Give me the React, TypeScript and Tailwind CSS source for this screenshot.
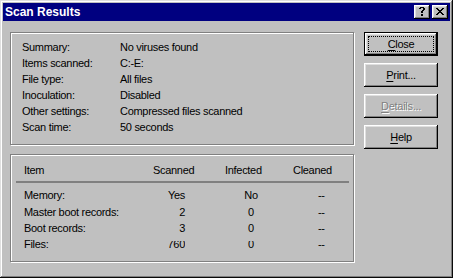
import React from "react";

const bevel =
  "shadow-[inset_-1px_-1px_#000,inset_1px_1px_#fff,inset_-2px_-2px_#808080,inset_2px_2px_#dfdfdf]";

function TitleButton({ children }: { children: React.ReactNode }) {
  return (
    <div className={`w-[16px] h-[14px] bg-[#c0c0c0] flex items-center justify-center ${bevel}`}>
      {children}
    </div>
  );
}

function HelpGlyph() {
  const rows = [".XXXX.", "XX..XX", "....XX", "...XX.", "..XX..", "..XX..", "......", "..XX..", "..XX.."];
  return (
    <svg width="6" height="9" viewBox="0 0 6 9" shapeRendering="crispEdges" className="-mt-[1px] -ml-[1px]">
      {rows.flatMap((r, y) =>
        r.split("").map((c, x) => (c === "X" ? <rect key={`${x}-${y}`} x={x} y={y} width="1" height="1" fill="#000" /> : null))
      )}
    </svg>
  );
}

function CloseGlyph() {
  const rows = ["XX....XX", ".XX..XX.", "..XXXX..", "...XX...", "..XXXX..", ".XX..XX.", "XX....XX"];
  return (
    <svg width="8" height="7" viewBox="0 0 8 7" shapeRendering="crispEdges" className="-mt-[1px] -ml-[1px]">
      {rows.flatMap((r, y) =>
        r.split("").map((c, x) => (c === "X" ? <rect key={`${x}-${y}`} x={x} y={y} width="1" height="1" fill="#000" /> : null))
      )}
    </svg>
  );
}

function Btn({
  label,
  u,
  rest,
  isDefault,
  disabled,
}: {
  label?: string;
  u: string;
  rest: string;
  isDefault?: boolean;
  disabled?: boolean;
}) {
  const text = (
    <span
      className={
        disabled
          ? "text-[#808080] [text-shadow:1px_1px_0_#fff]"
          : "text-black"
      }
    >
      <span className="underline underline-offset-[2px]">{u}</span>
      {rest}
    </span>
  );
  if (isDefault) {
    return (
      <div className="w-[74px] h-[24px] border border-black bg-[#c0c0c0] relative">
        <div className={`w-full h-full flex items-center justify-center ${bevel}`}>{text}</div>
        <div className="absolute inset-[3px] border border-dotted border-black" />
      </div>
    );
  }
  return (
    <div className={`w-[74px] h-[24px] bg-[#c0c0c0] flex items-center justify-center ${bevel}`} aria-label={label}>
      {text}
    </div>
  );
}

const summary: [string, string][] = [
  ["Summary:", "No viruses found"],
  ["Items scanned:", "C:-E:"],
  ["File type:", "All files"],
  ["Inoculation:", "Disabled"],
  ["Other settings:", "Compressed files scanned"],
  ["Scan time:", "50 seconds"],
];

const results: { item: string; scanned: string; infected: string; cleaned: string; h: string; clip?: boolean }[] = [
  { item: "Memory:", scanned: "Yes", infected: "No", cleaned: "--", h: "h-[17px]" },
  { item: "Master boot records:", scanned: "2", infected: "0", cleaned: "--", h: "h-[16px]" },
  { item: "Boot records:", scanned: "3", infected: "0", cleaned: "--", h: "h-[16px]" },
  { item: "Files:", scanned: "760", infected: "0", cleaned: "--", h: "h-[16px]", clip: true },
];

export default function App() {
  return (
    <div
      className={`w-[453px] h-[278px] bg-[#c0c0c0] p-[3px] flex flex-col font-['Liberation_Sans',Arial,sans-serif] text-[11px] tracking-[-0.3px] text-black shadow-[inset_-1px_-1px_#0a0a0a,inset_1px_1px_#dfdfdf,inset_-2px_-2px_#808080,inset_2px_2px_#fff] overflow-hidden`}
    >
      {/* Title bar */}
      <div className="h-[18px] bg-[#000080] flex items-center pl-[2px] pr-[2px]">
        <span className="text-white font-bold text-[12px] tracking-[0px] leading-[18px] flex-1">Scan Results</span>
        <div className="flex gap-[2px]">
          <TitleButton>
            <HelpGlyph />
          </TitleButton>
          <TitleButton>
            <CloseGlyph />
          </TitleButton>
        </div>
      </div>

      {/* Body */}
      <div className="flex pl-[7px] pt-[11px]">
        <div className="w-[344px] flex flex-col gap-[9px]">
          {/* Summary group */}
          <div className="h-[113px] border border-[#808080] shadow-[inset_1px_1px_#fff,1px_1px_#fff] pt-[6px] pl-[11px]">
            {summary.map(([k, v]) => (
              <div key={k} className="flex h-[16px] leading-[16px]">
                <span className="w-[98px]">{k}</span>
                <span>{v}</span>
              </div>
            ))}
          </div>

          {/* Results group */}
          <div className="h-[108px] border border-[#808080] shadow-[inset_1px_1px_#fff,1px_1px_#fff] pt-[7px]">
            <div className="flex h-[16px] leading-[16px] pl-[13px]">
              <span className="w-[129px]">Item</span>
              <span className="w-[72px]">Scanned</span>
              <span className="w-[68px]">Infected</span>
              <span>Cleaned</span>
            </div>
            <div className="ml-[5px] mt-[3px] w-[333px] h-[2px] bg-[#808080]" />
            <div className="mt-[4px]">
              {results.map((r) => (
                <div key={r.item} className={`flex ${r.h} leading-[16px] pl-[13px]`}>
                  <span className="w-[126px]">{r.item}</span>
                  <span className={`w-[35px] text-right ${r.clip ? "[clip-path:inset(5px_0_0_0)]" : ""}`}>
                    {r.scanned}
                  </span>
                  <span className={`w-[132px] text-center ${r.clip ? "[clip-path:inset(5px_0_0_0)]" : ""}`}>
                    {r.infected}
                  </span>
                  <span className="pl-[1px]">{r.cleaned}</span>
                </div>
              ))}
            </div>
          </div>
        </div>

        {/* Buttons */}
        <div className="ml-[10px] flex flex-col gap-[7px]">
          <Btn isDefault u="C" rest="lose" />
          <Btn u="P" rest="rint..." />
          <Btn disabled u="D" rest="etails..." />
          <Btn u="H" rest="elp" />
        </div>
      </div>
    </div>
  );
}
